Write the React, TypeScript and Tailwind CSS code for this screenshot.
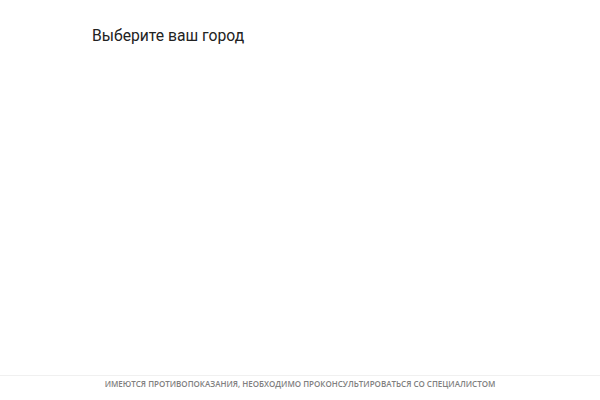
import React from 'react';

const App: React.FC = () => {
  return (
    <div className="min-h-screen flex flex-col bg-white">
      {/* City selector */}
      <div className="flex-1 px-[92px] pt-[25px]">
        <h1
          className="text-[15.7px] leading-[22px] text-[#222] font-normal"
          style={{ fontFamily: 'Roboto, sans-serif' }}
        >
          Выберите ваш город
        </h1>
      </div>

      {/* Warning footer */}
      <div className="h-[25px] border-t border-[#f0f0f0] flex items-start justify-center pt-[2px]">
        <span
          className="text-[8px] leading-[12px] font-semibold uppercase text-[#808080]"
          style={{ fontFamily: '"Open Sans", sans-serif' }}
        >
          Имеются противопоказания, необходимо проконсультироваться со специалистом
        </span>
      </div>
    </div>
  );
};

export default App;
